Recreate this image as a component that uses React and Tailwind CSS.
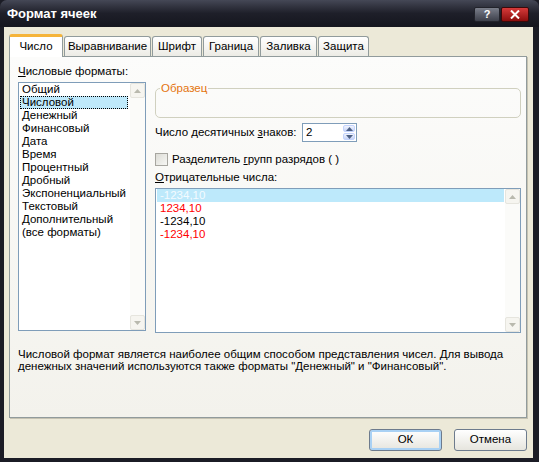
import React from "react";

const FONT = { fontFamily: '"Liberation Sans", Arial, sans-serif' };

const formats = [
  "Общий",
  "Числовой",
  "Денежный",
  "Финансовый",
  "Дата",
  "Время",
  "Процентный",
  "Дробный",
  "Экспоненциальный",
  "Текстовый",
  "Дополнительный",
  "(все форматы)",
];

const negatives = [
  { text: "-1234,10", cls: "text-[#f4fbff]", selected: true },
  { text: "1234,10", cls: "text-[#ff0000]" },
  { text: "-1234,10", cls: "text-black" },
  { text: "-1234,10", cls: "text-[#ff0000]" },
];

const tabs = [
  { label: "Выравнивание", w: "w-[87px]" },
  { label: "Шрифт", w: "w-[50px]" },
  { label: "Граница", w: "w-[56px]" },
  { label: "Заливка", w: "w-[57px]" },
  { label: "Защита", w: "w-[51px]" },
];

function Arrow({ up }) {
  return (
    <svg width="7" height="4" viewBox="0 0 7 4">
      <path d={up ? "M0 4 L3.5 0 L7 4 Z" : "M0 0 L3.5 4 L7 0 Z"} fill="#b9b9ae" />
    </svg>
  );
}

// faded (disabled) XP scrollbar
function Scrollbar() {
  return (
    <div className="w-[15px] flex flex-col justify-between bg-[#fbfbf9]">
      <div className="h-[15px] flex items-center justify-center border border-[#e6e5de] bg-[#f6f5f0] rounded-[2px]">
        <Arrow up />
      </div>
      <div className="h-[15px] flex items-center justify-center border border-[#e6e5de] bg-[#f6f5f0] rounded-[2px]">
        <Arrow />
      </div>
    </div>
  );
}

export default function App() {
  return (
    <div className="w-[539px] h-[462px] flex flex-col bg-[#1b1c25] overflow-hidden" style={FONT}>
      {/* title bar */}
      <div className="h-[27px] flex items-center justify-between pl-[7px] pr-[10px] bg-gradient-to-b from-[#454856] via-[#1e1f29] to-[#15161e] rounded-t-[7px]">
        <span className="text-white font-bold text-[13px]">Формат ячеек</span>
        <div className="flex gap-[1px] mt-[2px]">
          <div className="w-[26px] h-[15px] flex items-center justify-center rounded-[2px] bg-gradient-to-b from-[#7a7e8a] to-[#3d404b] border border-[#22232b] text-white text-[11px] font-bold">
            ?
          </div>
          <div className="w-[28px] h-[15px] flex items-center justify-center rounded-[2px] bg-gradient-to-b from-[#d63a3a] to-[#8c0c0c] border border-[#3a0a0a]">
            <svg width="10" height="9" viewBox="0 0 10 9">
              <path d="M1 0.5 L9 8.5 M9 0.5 L1 8.5" stroke="white" strokeWidth="2" />
            </svg>
          </div>
        </div>
      </div>

      {/* body */}
      <div className="flex-1 flex flex-col bg-[#ece9d8] ml-[4px] mr-[6px] mb-[4px] pl-[5px] pr-[6px] pt-[7px]">
        {/* tabs */}
        <div className="flex items-end gap-[1px]">
          <div className="relative z-10 -mb-px h-[23px] w-[54px] flex items-center justify-center bg-white border border-b-0 border-[#919b9c] border-t-[3px] border-t-[#f5b43a] rounded-t-[3px] text-[11.5px] text-black">
            Число
          </div>
          {tabs.map((t) => (
            <div
              key={t.label}
              className={`${t.w} mt-[2px] h-[20px] flex items-center justify-center bg-gradient-to-b from-white to-[#ecebe5] border border-b-0 border-[#919b9c] rounded-t-[3px] text-[11.5px] text-black`}
            >
              {t.label}
            </div>
          ))}
        </div>

        {/* panel */}
        <div className="h-[362px] flex flex-col border border-[#919b9c] bg-gradient-to-b from-[#fcfcfb] to-[#f3f2ec] pl-[8px] pt-[8px] shadow-[1px_1px_0_#c5c2b2] text-[11.5px] text-black">
          <div className="flex gap-[9px]">
            {/* left column */}
            <div className="w-[128px] flex flex-col">
              <div className="h-[13px] leading-[13px]">
                <span className="underline">Ч</span>исловые форматы:
              </div>
              <div className="mt-[4px] h-[249px] flex border border-[#7f9db9] bg-white">
                <div className="flex-1 pl-[1px] pr-[2px]">
                  {formats.map((f, i) => (
                    <div
                      key={f}
                      className={
                        i === 1
                          ? "h-[13px] leading-[11px] pl-[1px] bg-[#bfe9fb] border border-dotted border-black"
                          : "h-[13px] leading-[13px] pl-[2px]"
                      }
                    >
                      {f}
                    </div>
                  ))}
                </div>
                <Scrollbar />
              </div>
            </div>

            {/* right column */}
            <div className="w-[366px] flex flex-col">
              <fieldset className="mt-[17px] h-[36px] border border-[#d0d0bf] rounded-[5px] pl-[4px]">
                <legend className="text-[#e4740e] px-[1px] leading-[12px]">Образец</legend>
              </fieldset>

              <div className="mt-[5px] flex items-center h-[19px]">
                <span className="w-[147px]">
                  Число десятичных <span className="underline">з</span>наков:
                </span>
                <div className="w-[55px] h-[19px] flex border border-[#7f9db9] bg-white">
                  <div className="flex-1 pl-[3px] leading-[17px]">2</div>
                  <div className="w-[14px] flex flex-col gap-[1px] p-px">
                    <div className="flex-1 flex items-center justify-center rounded-[2px] border border-[#c3d3fd] bg-gradient-to-b from-[#f2f5fd] to-[#c6d3f7]">
                      <svg width="7" height="4" viewBox="0 0 7 4">
                        <path d="M0 4 L3.5 0 L7 4 Z" fill="#4d6185" />
                      </svg>
                    </div>
                    <div className="flex-1 flex items-center justify-center rounded-[2px] border border-[#c3d3fd] bg-gradient-to-b from-[#f2f5fd] to-[#c6d3f7]">
                      <svg width="7" height="4" viewBox="0 0 7 4">
                        <path d="M0 0 L3.5 4 L7 0 Z" fill="#4d6185" />
                      </svg>
                    </div>
                  </div>
                </div>
              </div>

              <div className="mt-[11px] flex items-center h-[13px]">
                <div className="w-[13px] h-[13px] border border-[#a7a6a0] bg-gradient-to-br from-[#dcdcd6] to-[#f7f7f4]" />
                <span className="ml-[4px]">
                  Разделитель <span className="underline">г</span>рупп разрядов ( )
                </span>
              </div>

              <div className="mt-[5px] h-[13px] leading-[13px]">
                <span className="underline">О</span>трицательные числа:
              </div>

              <div className="mt-[4px] h-[145px] flex border border-[#7f9db9] bg-white">
                <div className="flex-1 pl-[1px] pr-[1px]">
                  {negatives.map((n, i) => (
                    <div
                      key={i}
                      className={`h-[13px] leading-[13px] pl-[3px] ${n.cls} ${n.selected ? "bg-[#bde9fb]" : ""}`}
                    >
                      {n.text}
                    </div>
                  ))}
                </div>
                <Scrollbar />
              </div>
            </div>
          </div>

          <p className="mt-[15px] leading-[12px]">
            Числовой формат является наиболее общим способом представления чисел. Для вывода
            <br />
            денежных значений используются также форматы "Денежный" и "Финансовый".
          </p>
        </div>

        {/* buttons */}
        <div className="mt-[11px] flex justify-end gap-[12px]">
          <button className="w-[73px] h-[22px] rounded-[3px] border border-[#6d7b8d] bg-gradient-to-b from-white to-[#e6e5de] shadow-[inset_0_0_0_2px_#a9d1f4] text-[11.5px] text-black">
            ОК
          </button>
          <button className="w-[73px] h-[22px] rounded-[3px] border border-[#6d7b8d] bg-gradient-to-b from-white to-[#e6e5de] text-[11.5px] text-black">
            Отмена
          </button>
        </div>
      </div>
    </div>
  );
}
